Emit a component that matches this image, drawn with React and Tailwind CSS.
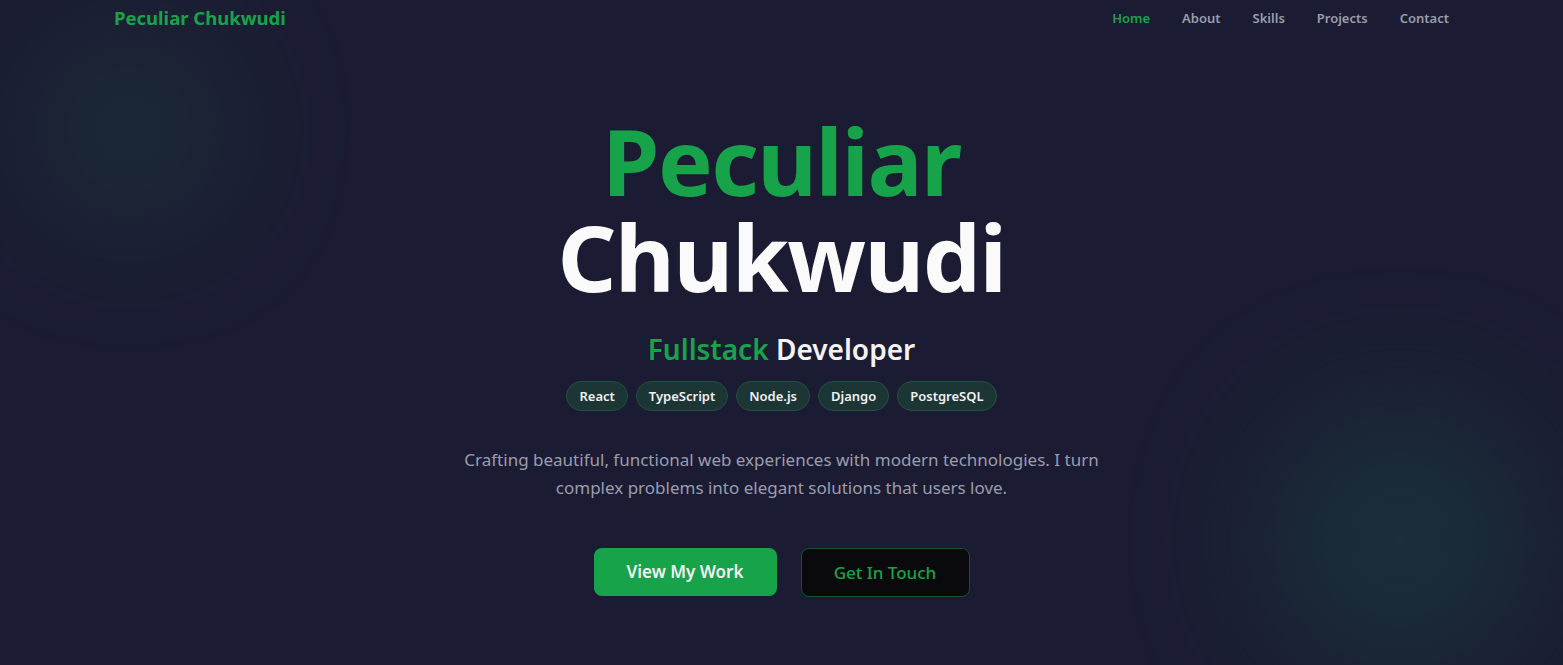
import { useMemo } from 'react';

const font = { fontFamily: '"Noto Sans", "Open Sans", sans-serif' };

export default function App() {
  const links = useMemo(() => ['Home', 'About', 'Skills', 'Projects', 'Contact'], []);
  const stack = ['React', 'TypeScript', 'Node.js', 'Django', 'PostgreSQL'];

  return (
    <div className="relative min-h-[665px] overflow-hidden bg-[#1b1c33]" style={font}>
      {/* soft background glows */}
      <div className="absolute left-[40px] top-[40px] h-[180px] w-[180px] rounded-full bg-[#1c3a38] opacity-60 blur-3xl" />
      <div className="absolute left-[1260px] top-[400px] h-[280px] w-[280px] rounded-full bg-[#1a3a3c] opacity-60 blur-3xl" />

      <header className="relative flex h-[36px] items-center justify-between px-[114px]">
        <span className="text-[18.5px] font-bold text-[#16a34a]">Peculiar Chukwudi</span>
        <nav className="flex items-center gap-8 pt-[1px]">
          {links.map((l, i) => (
            <a
              key={l}
              href="#"
              className={`text-[13px] font-semibold ${i === 0 ? 'text-[#16a34a]' : 'text-[#9b9cad]'}`}
            >
              {l}
            </a>
          ))}
        </nav>
      </header>

      <main className="relative flex flex-col items-center pt-[77px] text-center">
        <h1 className="text-[92px] font-bold leading-[96px] tracking-[-1.5px]">
          <span className="block text-[#16a34a]">Peculiar</span>
          <span className="block text-[#fafafa]">Chukwudi</span>
        </h1>

        <h2 className="mt-[24px] text-[28px] font-semibold leading-10">
          <span className="text-[#16a34a]">Fullstack</span> <span className="text-[#f4f4f5]">Developer</span>
        </h2>

        <div className="mt-[12px] flex gap-2">
          {stack.map((s) => (
            <span
              key={s}
              className="rounded-full border border-[#23503f] bg-[#1c3636] px-3 py-[5px] text-[13px] font-semibold leading-[18px] text-[#f1f1f3]"
            >
              {s}
            </span>
          ))}
        </div>

        <p className="mt-[35px] max-w-[640px] text-[17px] leading-[28px] text-[#9b9cad]">
          Crafting beautiful, functional web experiences with modern technologies. I turn complex problems into elegant solutions that users love.
        </p>

        <div className="mt-[46px] flex gap-6">
          <button className="h-12 w-[183px] rounded-lg bg-[#16a34a] text-[17px] font-semibold text-[#f4f4f5]">
            View My Work
          </button>
          <button className="h-[49px] w-[169px] rounded-lg border border-[#14532d] bg-[#0a0a0c] text-[17px] font-medium text-[#16a34a]">
            Get In Touch
          </button>
        </div>
      </main>
    </div>
  );
}
